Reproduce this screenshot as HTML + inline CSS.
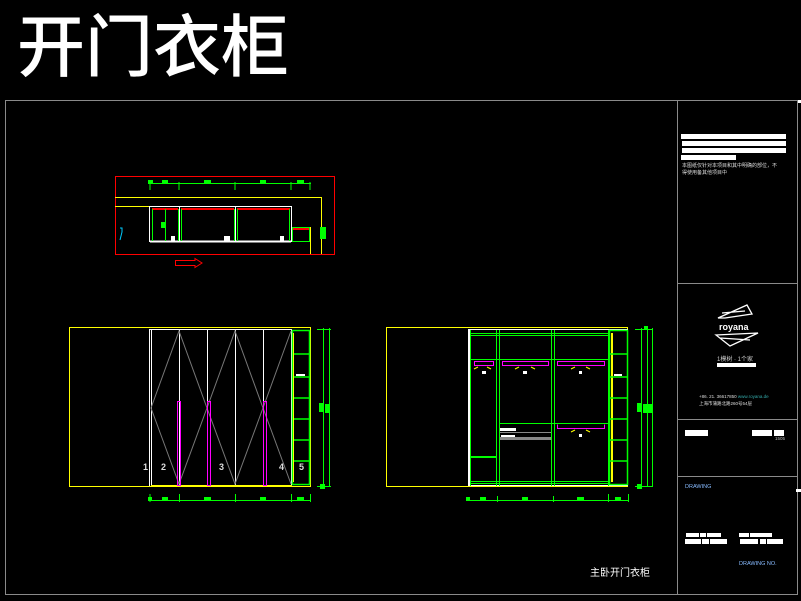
<!DOCTYPE html>
<html><head><meta charset="utf-8"><style>
html,body{margin:0;padding:0;background:#000;width:801px;height:601px;overflow:hidden}
svg{display:block}
text{font-family:"Liberation Sans","Noto Sans CJK SC",sans-serif}
</style></head><body>
<svg width="801" height="601" viewBox="0 0 801 601" xmlns="http://www.w3.org/2000/svg">
<rect width="801" height="601" fill="#000"/>
<text x="17" y="71" font-size="68" fill="#fff" font-family="'Noto Sans CJK SC',sans-serif" font-weight="500">开门衣柜</text>
<!-- frame -->
<g stroke="#8a8a8a" stroke-width="1" fill="none">
<rect x="5.5" y="100.5" width="792" height="494"/>
<line x1="677.5" y1="100" x2="677.5" y2="595"/>
<line x1="677" y1="283.5" x2="798" y2="283.5"/>
<line x1="677" y1="419.5" x2="798" y2="419.5"/>
<line x1="677" y1="476.5" x2="798" y2="476.5"/>
</g>
<rect x="798" y="100" width="3" height="3" fill="#fff"/>
<rect x="796" y="489" width="5" height="3" fill="#fff"/>
<!-- title block -->
<g fill="#fff">
<rect x="681" y="134" width="105" height="5"/>
<rect x="682" y="141" width="104" height="5"/>
<rect x="682" y="148" width="104" height="5"/>
<rect x="681" y="155" width="55" height="5"/>
<rect x="717" y="363" width="39" height="4"/>
<rect x="685" y="430" width="23" height="6"/>
<rect x="752" y="430" width="20" height="6"/><rect x="774" y="430" width="10" height="6"/>
<rect x="686" y="533" width="13" height="4"/><rect x="700" y="533" width="6" height="4"/><rect x="707" y="533" width="14" height="4"/>
<rect x="685" y="539" width="16" height="5"/><rect x="702" y="539" width="7" height="5"/><rect x="710" y="539" width="17" height="5"/>
<rect x="739" y="533" width="10" height="4"/><rect x="750" y="533" width="22" height="4"/>
<rect x="740" y="539" width="18" height="5"/><rect x="760" y="539" width="6" height="5"/><rect x="767" y="539" width="16" height="5"/>
</g>
<text x="682" y="167" font-size="5" fill="#ddd">本图纸仅针对本项目和其中明确的部位，不</text>
<text x="682" y="174" font-size="5" fill="#ddd">得使用备其他项目中</text>
<g stroke="#fff" stroke-width="1.3" fill="none">
<path d="M718 318 L747 305 L752 314 L725 318 Z M722 313 L745 311"/>
<path d="M716 335 L758 333 L730 346 Z M720 338 L750 340"/>
</g>
<text x="719" y="330" font-size="9" font-weight="bold" fill="#fff">royana</text>
<text x="717" y="361" font-size="6" fill="#ccc">1模树 · 1个家</text>
<text x="699" y="398" font-size="4.5" fill="#ddd">+86. 21. 36617850 <tspan fill="#3aa">www.royana.de</tspan></text>
<text x="699" y="405" font-size="4.5" fill="#ddd">上海市蒲路北路260号54层</text>
<text x="775" y="440" font-size="4.5" fill="#bbb">1505</text>
<text x="685" y="488" font-size="5.5" fill="#8bf">DRAWING</text>
<text x="739" y="565" font-size="5.5" fill="#8bf">DRAWING NO.</text>
<text x="590" y="576" font-size="10" fill="#fff" font-family="'Noto Sans CJK SC',sans-serif">主卧开门衣柜</text>
<!-- plan -->
<rect x="115.5" y="176.5" width="219" height="78" fill="none" stroke="#f00" stroke-width="1"/>
<g stroke="#0f0" stroke-width="1" fill="none">
<line x1="149" y1="183.5" x2="311" y2="183.5"/>
<line x1="150" y1="180" x2="150" y2="190"/><line x1="179" y1="182" x2="179" y2="190"/><line x1="235" y1="182" x2="235" y2="190"/><line x1="291" y1="182" x2="291" y2="190"/><line x1="310" y1="182" x2="310" y2="190"/>
</g>
<g fill="#0f0"><rect x="148" y="180" width="5" height="4"/><rect x="162" y="180" width="6" height="4"/><rect x="204" y="180" width="7" height="4"/><rect x="260" y="180" width="6" height="4"/><rect x="297" y="180" width="7" height="4"/></g>
<path d="M115 197.5 H321.5 V254 M115 206.5 H150" stroke="#ff0" fill="none"/>
<line x1="310.5" y1="227" x2="310.5" y2="254" stroke="#ff0"/>
<rect x="149.5" y="206.5" width="142" height="35" fill="none" stroke="#fff"/>
<line x1="150" y1="241.5" x2="291" y2="241.5" stroke="#fff" stroke-width="2"/>
<g stroke="#fff"><line x1="179.5" y1="206" x2="179.5" y2="242"/><line x1="235.5" y1="206" x2="235.5" y2="242"/></g>
<g stroke="#f00" stroke-width="2"><line x1="152" y1="209" x2="178" y2="209"/><line x1="181" y1="209" x2="234" y2="209"/><line x1="237" y1="209" x2="290" y2="209"/><line x1="293" y1="229" x2="309" y2="229"/></g>
<g stroke="#0f0" fill="none"><line x1="152.5" y1="209" x2="152.5" y2="241"/><line x1="165.5" y1="209" x2="165.5" y2="241"/><line x1="178.5" y1="209" x2="178.5" y2="241"/><line x1="181.5" y1="209" x2="181.5" y2="241"/><line x1="234.5" y1="209" x2="234.5" y2="241"/><line x1="237.5" y1="209" x2="237.5" y2="241"/><line x1="289.5" y1="209" x2="289.5" y2="241"/><rect x="292.5" y="227.5" width="17" height="14"/></g>
<rect x="161" y="222" width="4" height="6" fill="#0f0"/><rect x="320" y="227" width="6" height="12" fill="#0f0"/>
<g fill="#fff"><rect x="171" y="236" width="4" height="5"/><rect x="224" y="236" width="6" height="5"/><rect x="280" y="236" width="4" height="5"/></g>
<path d="M120 228 H122 V232 L120 240" stroke="#0cf" fill="none"/>
<path d="M175.5 260.5 H195 V258.5 L202 263 L195 267.5 V265.5 H175.5 Z" fill="none" stroke="#f00"/>
<!-- left elevation -->
<rect x="69.5" y="327.5" width="241" height="159" fill="none" stroke="#ff0"/>
<g stroke="#fff"><line x1="149.5" y1="329" x2="149.5" y2="486"/><line x1="151.5" y1="329" x2="151.5" y2="486"/><line x1="150" y1="329.5" x2="292" y2="329.5"/><line x1="179.5" y1="329" x2="179.5" y2="486"/><line x1="207.5" y1="329" x2="207.5" y2="486"/><line x1="235.5" y1="329" x2="235.5" y2="486"/><line x1="263.5" y1="329" x2="263.5" y2="486"/><line x1="291.5" y1="329" x2="291.5" y2="486"/></g>
<line x1="151" y1="485.5" x2="292" y2="485.5" stroke="#ff0"/>
<g stroke="#777" fill="none"><path d="M151 408 L179 331 L207 408 L235 331 L263 408 L291 331"/><path d="M151 408 L179 484 L207 408 L235 484 L263 408 L291 484"/></g>
<g stroke="#f0f" fill="none"><rect x="177.5" y="401.5" width="3" height="84"/><rect x="207.5" y="401.5" width="3" height="84"/><rect x="263.5" y="401.5" width="3" height="84"/></g>
<rect x="292.5" y="330.5" width="17" height="154" fill="none" stroke="#0f0" stroke-width="1.5"/>
<g stroke="#0f0" stroke-width="1.5"><line x1="293" y1="354" x2="310" y2="354"/><line x1="293" y1="377" x2="310" y2="377"/><line x1="293" y1="398" x2="310" y2="398"/><line x1="293" y1="419" x2="310" y2="419"/><line x1="293" y1="440" x2="310" y2="440"/><line x1="293" y1="461" x2="310" y2="461"/></g>
<line x1="293.5" y1="333" x2="293.5" y2="482" stroke="#ff0"/>
<rect x="296" y="374" width="9" height="2" fill="#fff"/>
<g font-size="9" fill="#ddd" font-weight="bold"><text x="143" y="470">1</text><text x="161" y="470">2</text><text x="219" y="470">3</text><text x="279" y="470">4</text><text x="299" y="470">5</text></g>
<g stroke="#0f0" fill="none"><line x1="149" y1="500.5" x2="311" y2="500.5"/><line x1="150" y1="494" x2="150" y2="502"/><line x1="179.5" y1="494" x2="179.5" y2="502"/><line x1="235.5" y1="494" x2="235.5" y2="502"/><line x1="291.5" y1="494" x2="291.5" y2="502"/><line x1="310.5" y1="494" x2="310.5" y2="502"/>
<line x1="323.5" y1="328" x2="323.5" y2="487"/><line x1="329.5" y1="328" x2="329.5" y2="487"/><line x1="317" y1="329.5" x2="331" y2="329.5"/><line x1="317" y1="486.5" x2="331" y2="486.5"/></g>
<g fill="#0f0"><rect x="148" y="497" width="4" height="4"/><rect x="162" y="497" width="6" height="3"/><rect x="204" y="497" width="7" height="3"/><rect x="260" y="497" width="6" height="3"/><rect x="297" y="497" width="7" height="3"/><rect x="319" y="403" width="5" height="9"/><rect x="325" y="404" width="4" height="9"/><rect x="320" y="484" width="5" height="5"/></g>
<!-- right elevation -->
<rect x="386.5" y="327.5" width="241" height="159" fill="none" stroke="#ff0"/>
<rect x="468" y="329" width="2" height="157" fill="#fff"/>
<line x1="470" y1="329.5" x2="628" y2="329.5" stroke="#fff"/>
<line x1="470" y1="485.5" x2="628" y2="485.5" stroke="#fff"/>
<g stroke="#0f0" fill="none">
<line x1="470.5" y1="330" x2="470.5" y2="486"/><line x1="496.5" y1="330" x2="496.5" y2="486"/><line x1="499.5" y1="330" x2="499.5" y2="486"/><line x1="551.5" y1="330" x2="551.5" y2="486"/><line x1="554.5" y1="330" x2="554.5" y2="486"/><line x1="608.5" y1="330" x2="608.5" y2="486"/>
<line x1="470" y1="333.5" x2="608" y2="333.5"/><line x1="470" y1="335.5" x2="608" y2="335.5"/><line x1="470" y1="359.5" x2="608" y2="359.5"/>
<line x1="470" y1="481.5" x2="608" y2="481.5"/><line x1="470" y1="483.5" x2="608" y2="483.5"/>
<line x1="470" y1="456.5" x2="496" y2="456.5"/><line x1="470" y1="457.5" x2="496" y2="457.5"/>
<line x1="500" y1="423.5" x2="608" y2="423.5"/>
</g>
<g stroke="#f0f" fill="none"><rect x="474.5" y="361.5" width="19" height="4"/><rect x="502.5" y="361.5" width="46" height="4"/><rect x="557.5" y="361.5" width="47" height="4"/><path d="M557.5 424.5 V428.5 H604.5 V424.5"/></g>
<g fill="#fff"><rect x="482" y="371" width="4" height="3"/><rect x="523" y="371" width="4" height="3"/><rect x="579" y="371" width="3" height="3"/><rect x="579" y="434" width="3" height="3"/><rect x="500" y="428" width="16" height="3"/><rect x="501" y="435" width="14" height="2"/></g>
<g stroke="#ff0" fill="none"><path d="M474 369 l4 -2 M491 369 l-4 -2 M515 369 l4 -2 M535 369 l-4 -2 M571 369 l4 -2 M590 369 l-4 -2 M571 432 l4 -2 M590 432 l-4 -2"/></g>
<rect x="500" y="437" width="51" height="3" fill="#888"/>
<line x1="500" y1="432.5" x2="551" y2="432.5" stroke="#888"/>
<rect x="609.5" y="330.5" width="18" height="154" fill="none" stroke="#0f0" stroke-width="1.5"/>
<rect x="611" y="333" width="2" height="149" fill="#ff0"/>
<g stroke="#0f0" stroke-width="1.5"><line x1="610" y1="354" x2="627" y2="354"/><line x1="610" y1="377" x2="627" y2="377"/><line x1="610" y1="398" x2="627" y2="398"/><line x1="610" y1="419" x2="627" y2="419"/><line x1="610" y1="440" x2="627" y2="440"/><line x1="610" y1="461" x2="627" y2="461"/></g>
<rect x="614" y="374" width="8" height="2" fill="#fff"/>
<g stroke="#0f0" fill="none"><line x1="466" y1="500.5" x2="628" y2="500.5"/><line x1="497.5" y1="496" x2="497.5" y2="502"/><line x1="553.5" y1="496" x2="553.5" y2="502"/><line x1="608.5" y1="494" x2="608.5" y2="502"/><line x1="628.5" y1="494" x2="628.5" y2="502"/>
<line x1="641.5" y1="328" x2="641.5" y2="487"/><line x1="647.5" y1="326" x2="647.5" y2="487"/><line x1="652.5" y1="328" x2="652.5" y2="487"/><line x1="635" y1="329.5" x2="653" y2="329.5"/><line x1="635" y1="486.5" x2="653" y2="486.5"/></g>
<g fill="#0f0"><rect x="466" y="497" width="4" height="4"/><rect x="480" y="497" width="6" height="3"/><rect x="522" y="497" width="6" height="3"/><rect x="577" y="497" width="7" height="3"/><rect x="615" y="497" width="6" height="3"/><rect x="637" y="403" width="5" height="9"/><rect x="643" y="404" width="9" height="9"/><rect x="637" y="484" width="5" height="5"/><rect x="644" y="326" width="4" height="4"/></g>
</svg>
</body></html>
